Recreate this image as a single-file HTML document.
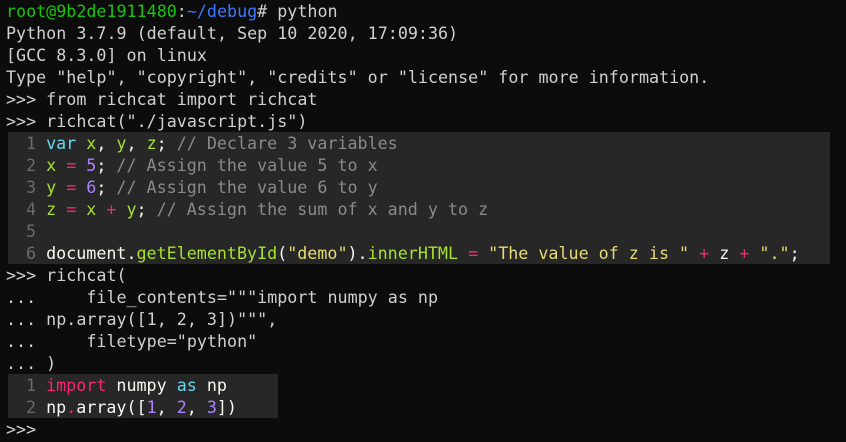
<!DOCTYPE html>
<html><head><style>
body{margin:0;background:#0c0c0c;width:846px;height:442px;overflow:hidden}
pre{margin:0;padding:0 0 0 6px;font-family:"DejaVu Sans Mono","Liberation Mono",monospace;font-size:16.7px;line-height:22px;color:#d0d0d0;white-space:pre}
.b{display:block;background:#272727;margin-left:2px;padding-left:18px}
.n{color:#6a6a6a}.g{color:#a6e22e}.c{color:#8a8a8a}.k{color:#66d9ef}.p{color:#ae81ff}.r{color:#f92672}.s{color:#e6db74}.w{color:#f8f8f2}
.u{color:#16c60c}.d{color:#3b78ff}
</style></head><body><pre><span class="u">root@9b2de1911480</span>:<span class="d">~/debug</span># python
Python 3.7.9 (default, Sep 10 2020, 17:09:36)
[GCC 8.3.0] on linux
Type "help", "copyright", "credits" or "license" for more information.
&gt;&gt;&gt; from richcat import richcat
&gt;&gt;&gt; richcat("./javascript.js")
<span class="b" style="width:804px"><span class="n">1 </span><span class="k">var</span><span class="w"> </span><span class="g">x</span><span class="w">, </span><span class="g">y</span><span class="w">, </span><span class="g">z</span><span class="w">; </span><span class="c">// Declare 3 variables</span>
<span class="n">2 </span><span class="g">x</span> <span class="r">=</span> <span class="p">5</span><span class="w">; </span><span class="c">// Assign the value 5 to x</span>
<span class="n">3 </span><span class="g">y</span> <span class="r">=</span> <span class="p">6</span><span class="w">; </span><span class="c">// Assign the value 6 to y</span>
<span class="n">4 </span><span class="g">z</span> <span class="r">=</span> <span class="g">x</span> <span class="r">+</span> <span class="g">y</span><span class="w">; </span><span class="c">// Assign the sum of x and y to z</span>
<span class="n">5 </span>
<span class="n">6 </span><span class="w">document.</span><span class="g">getElementById</span><span class="w">(</span><span class="s">"demo"</span><span class="w">).</span><span class="g">innerHTML</span> <span class="r">=</span> <span class="s">"The value of z is "</span> <span class="r">+</span> <span class="w">z</span> <span class="r">+</span> <span class="s">"."</span><span class="w">;</span></span>&gt;&gt;&gt; richcat(
...     file_contents="""import numpy as np
... np.array([1, 2, 3])""",
...     filetype="python"
... )
<span class="b" style="width:252px"><span class="n">1 </span><span class="r">import</span><span class="w"> numpy </span><span class="k">as</span><span class="w"> np</span>
<span class="n">2 </span><span class="w">np</span><span class="r">.</span><span class="w">array([</span><span class="p">1</span><span class="w">, </span><span class="p">2</span><span class="w">, </span><span class="p">3</span><span class="w">])</span></span>&gt;&gt;&gt;
</pre></body></html>
